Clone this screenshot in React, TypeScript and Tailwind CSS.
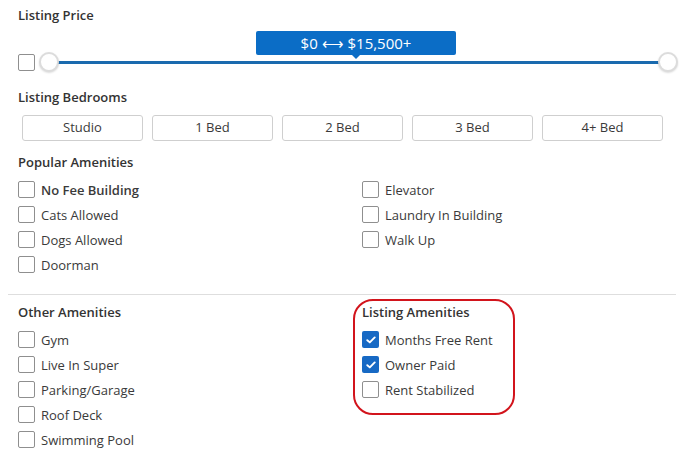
import React from "react";

const Box = ({ checked = false }: { checked?: boolean }) =>
  checked ? (
    <span className="flex h-[17px] w-[17px] shrink-0 items-center justify-center rounded-[2px] bg-[#1769c4]">
      <svg width="10" height="8" viewBox="0 0 10 8" fill="none">
        <path d="M1.3 4.2 L3.8 6.4 L8.7 1.4" stroke="white" strokeWidth="1.9" strokeLinecap="round" strokeLinejoin="round" />
      </svg>
    </span>
  ) : (
    <span className="block h-[17px] w-[17px] shrink-0 rounded-[2px] border border-[#8f8f8f] bg-white" />
  );

const Item = ({ label, checked = false, bold = false }: { label: string; checked?: boolean; bold?: boolean }) => (
  <div className="flex h-[25px] items-center">
    <Box checked={checked} />
    <span className={"ml-[6px] text-[13px] leading-[18px] text-[#3a3a3a] " + (bold ? "font-semibold text-[#2a2a2a]" : "")}>
      {label}
    </span>
  </div>
);

const Heading = ({ children }: { children: React.ReactNode }) => (
  <div className="text-[13px] font-semibold leading-[18px] text-[#333]">{children}</div>
);

export default function App() {
  return (
    <div className="h-[465px] w-[688px] overflow-hidden bg-white" style={{ fontFamily: "'Open Sans', 'Noto Sans', sans-serif" }}>
      <div className="pl-[18px] pt-[6px]">
        <Heading>Listing Price</Heading>
        <div className="relative mt-[7px] h-[42px]">
          <div className="absolute left-[238px] top-0 flex h-[24px] w-[200px] items-center justify-center rounded-[2px] bg-[#0b6dc6] text-[15px] leading-[24px] text-white">
            $0 ⟷ $15,500+
            <span className="absolute bottom-[-4px] left-[95px] h-0 w-0 border-x-[5px] border-t-[5px] border-x-transparent border-t-[#0b6dc6]" />
          </div>
          <div className="absolute bottom-0 left-0 right-0 flex h-[21px] items-center">
            <Box />
            <div className="relative ml-[14px] mr-[20px] h-[3px] flex-1 bg-[#1a6aae]">
              <span className="absolute left-[-10px] top-[-9px] h-[20px] w-[20px] rounded-full border-2 border-[#dcdcdc] bg-white shadow-[0_1px_2px_rgba(0,0,0,0.15)]" />
              <span className="absolute right-[-10px] top-[-9px] h-[20px] w-[20px] rounded-full border-2 border-[#dcdcdc] bg-white shadow-[0_1px_2px_rgba(0,0,0,0.15)]" />
            </div>
          </div>
        </div>

        <div className="mt-[15px]">
          <Heading>Listing Bedrooms</Heading>
        </div>
        <div className="ml-[4px] mt-[9px] grid w-[641px] grid-cols-5 gap-[9px]">
          {["Studio", "1 Bed", "2 Bed", "3 Bed", "4+ Bed"].map((b) => (
            <div key={b} className="flex h-[26px] items-center justify-center rounded-[3px] border border-[#cfcfcf] bg-white text-[13px] text-[#3a3a3a]">
              {b}
            </div>
          ))}
        </div>

        <div className="mt-[12px]">
          <Heading>Popular Amenities</Heading>
        </div>
        <div className="mt-[6px] grid grid-cols-[344px_1fr]">
          <div>
            <Item label="No Fee Building" bold />
            <Item label="Cats Allowed" />
            <Item label="Dogs Allowed" />
            <Item label="Doorman" />
          </div>
          <div>
            <Item label="Elevator" />
            <Item label="Laundry In Building" />
            <Item label="Walk Up" />
          </div>
        </div>
      </div>

      <div className="ml-[8px] mt-[17px] h-px w-[668px] bg-[#dedede]" />

      <div className="grid grid-cols-[344px_1fr] pl-[18px] pt-[8px]">
        <div>
          <Heading>Other Amenities</Heading>
          <div className="mt-[6px]">
            <Item label="Gym" />
            <Item label="Live In Super" />
            <Item label="Parking/Garage" />
            <Item label="Roof Deck" />
            <Item label="Swimming Pool" />
          </div>
        </div>
        <div className="relative">
          <div className="pointer-events-none absolute left-[-9px] top-[-4px] h-[116px] w-[162px] rounded-[20px] border-2 border-[#d2141c]" />
          <Heading>Listing Amenities</Heading>
          <div className="mt-[6px]">
            <Item label="Months Free Rent" checked />
            <Item label="Owner Paid" checked />
            <Item label="Rent Stabilized" />
          </div>
        </div>
      </div>
    </div>
  );
}
